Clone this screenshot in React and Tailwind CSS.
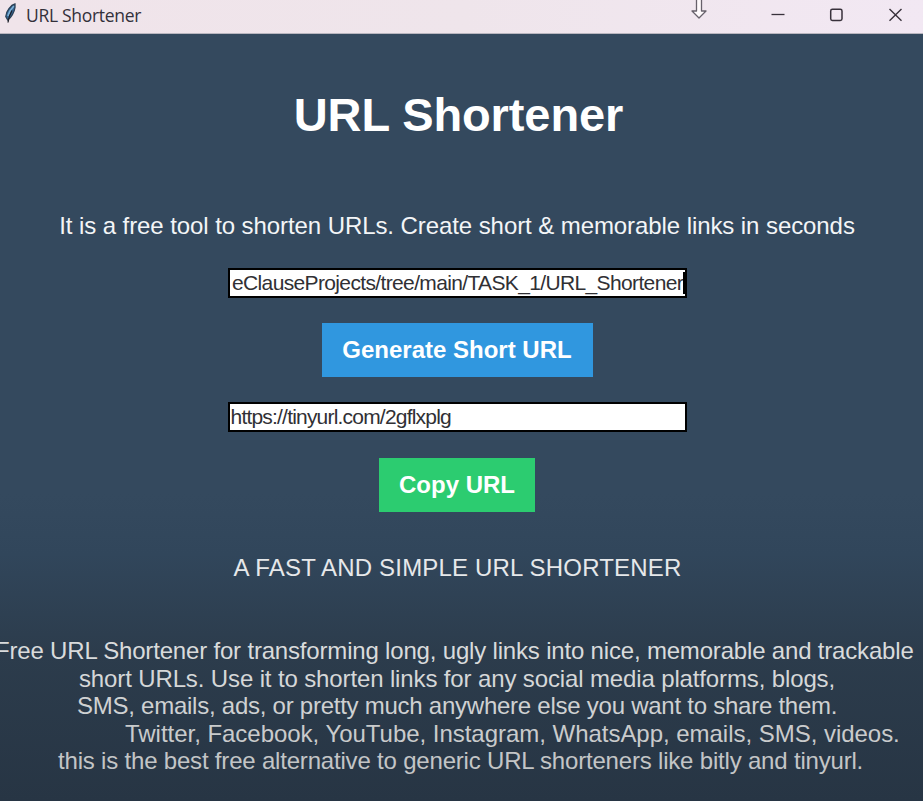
function FeatherIcon() {
  return (
    <svg className="h-[22px] w-[14px] shrink-0" viewBox="0 0 14 22" fill="none">
      <path d="M11 1C7 2 2 8 1.8 13.5L3.8 17C7 15 10.4 9 11 4.5Z" fill="#35699a" stroke="#2d4257" strokeWidth="1.3" />
      <path d="M9.8 3C7 6 5 9 3.9 13" stroke="#7fb2d6" strokeWidth="1.6" />
      <path d="M8 7.5C6 11 4.4 15 4 19.5" stroke="#1d1f27" strokeWidth="1.3" />
    </svg>
  );
}

function TitleBar() {
  return (
    <header className="flex h-[34px] shrink-0 items-start border-b border-[#b9b6bf] bg-gradient-to-r from-[#f0e4ea] via-[#efe5eb] to-[#f2e8f3] pl-[4px]">
      <div className="pt-[3px]"><FeatherIcon /></div>
      <span className='ml-[8px] w-[120px] whitespace-nowrap pt-[3px] font-["Open_Sans","Noto_Sans",sans-serif] text-[17.5px] leading-[24px] tracking-[-0.3px] text-[#33303a]'>URL Shortener</span>
      <div className="flex-1" />
      <svg className="h-[34px] w-[240px] shrink-0" viewBox="683 0 240 34" fill="none">
        <path d="M696.5 -1V11H692L699 18L706 11H701.5V-1" fill="#fffafc" stroke="#67616b" strokeWidth="1.3" strokeLinejoin="round" />
        <path d="M771.5 14.5H784.5" stroke="#38313b" strokeWidth="1.3" />
        <rect x="830.7" y="9.2" width="11.3" height="11.3" rx="1.7" stroke="#38313b" strokeWidth="1.5" />
        <path d="M889.5 9L901.5 20.8M901.5 9L889.5 20.8" stroke="#38313b" strokeWidth="1.4" />
      </svg>
    </header>
  );
}

export default function App() {
  return (
    <div className='flex h-[801px] w-[923px] flex-col overflow-hidden font-["Liberation_Sans",Arial,sans-serif]'>
      <TitleBar />
      <main className="flex flex-1 flex-col items-center bg-[linear-gradient(to_bottom,#34495e_0px,#34495e_460px,#31465b_520px,#2c3c4c_620px,#273544_767px)] pr-[9px] text-white">
        <h1 className="mt-[53px] whitespace-nowrap pl-[3px] text-[47px] font-bold leading-[56px] tracking-[-0.1px]">URL Shortener</h1>
        <p className="mt-[69px] whitespace-nowrap text-[24px] leading-[28px] tracking-[-0.08px] text-[#f3f5f7]">It is a free tool to shorten URLs. Create short &amp; memorable links in seconds</p>
        <div className="relative left-[0.5px] mt-[28px] flex h-[30px] w-[459px] items-center justify-between border-2 border-black bg-white pl-[2px] text-[#303034]">
          <span className="whitespace-nowrap text-[21px] leading-[24px] tracking-[-0.64px]">eClauseProjects/tree/main/TASK_1/URL_Shortener</span>
          <i className="-ml-[2px] h-[22px] w-[2px] shrink-0 bg-black" />
        </div>
        <button className="mt-[25px] h-[54px] w-[271px] whitespace-nowrap bg-[#3097df] text-[24px] font-bold leading-[28px]">Generate Short URL</button>
        <div className="mt-[25px] flex h-[30px] w-[459px] items-center border-2 border-black bg-white pl-px text-[#303034]">
          <span className="whitespace-nowrap text-[21px] leading-[24px] tracking-[-0.8px]">https://tinyurl.com/2gflxplg</span>
        </div>
        <button className="mt-[26px] h-[54px] w-[156px] whitespace-nowrap bg-[#2ccc70] text-[24px] font-bold leading-[28px]">Copy URL</button>
        <p className="mt-[42px] whitespace-nowrap pl-px text-[24px] leading-[28px] tracking-[0.18px] text-[#e6e8ea]">A FAST AND SIMPLE URL SHORTENER</p>
        <div className="mt-[55px] flex w-[923px] flex-col items-start self-start whitespace-nowrap text-[24px] leading-[27.6px] text-[#cfd1d2]">
          <p className="-ml-[5px] tracking-[-0.18px] text-[#d9dbdc]">Free URL Shortener for transforming long, ugly links into nice, memorable and trackable</p>
          <p className="ml-[79px] tracking-[-0.13px] text-[#d5d7d8]">short URLs. Use it to shorten links for any social media platforms, blogs,</p>
          <p className="ml-[77px] tracking-[-0.25px]">SMS, emails, ads, or pretty much anywhere else you want to share them.</p>
          <p className="ml-[125px] tracking-[-0.03px] text-[#c9cbcc]">Twitter, Facebook, YouTube, Instagram, WhatsApp, emails, SMS, videos.</p>
          <p className="ml-[58px] tracking-[-0.19px] text-[#c3c5c6]">this is the best free alternative to generic URL shorteners like bitly and tinyurl.</p>
        </div>
      </main>
    </div>
  );
}
